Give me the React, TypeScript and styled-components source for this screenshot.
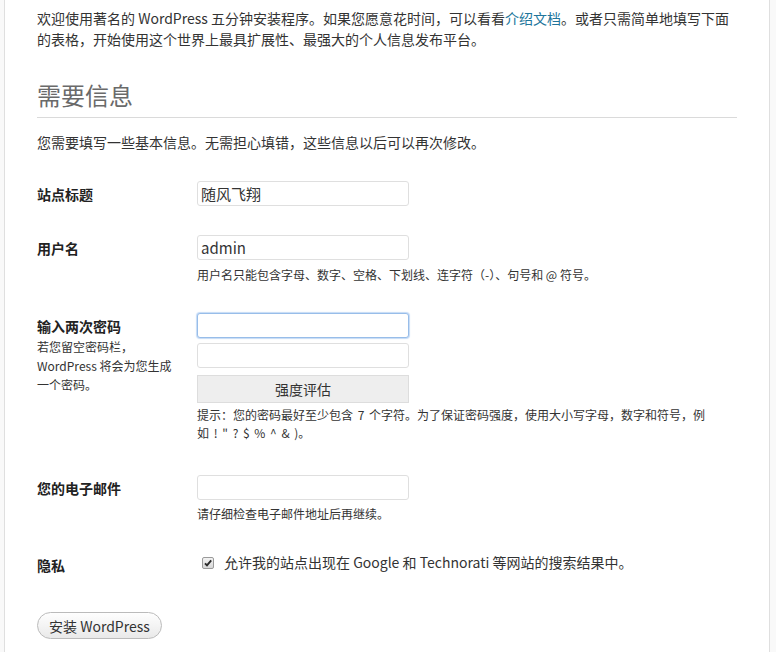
import React from 'react'
import styled, { createGlobalStyle } from 'styled-components'

const GlobalStyle = createGlobalStyle`
  html, body {
    margin: 0;
    padding: 0;
    background: #f9f9f9;
  }
  body {
    font-family: "Noto Sans CJK SC", "Liberation Sans", sans-serif;
    color: #333;
  }
`

const Page = styled.div`
  margin-left: 4px;
  width: 766px;
  min-height: 100vh;
  box-sizing: border-box;
  padding: 8px 32px 40px;
  background: #fff;
  border-left: 1px solid #dfdfdf;
  border-right: 1px solid #dfdfdf;
`

const Text = styled.p`
  margin: 0;
  font-size: 14px;
  line-height: 21px;
`

const Intro = styled(Text)``

const Note = styled(Text)`
  margin-top: 14px;
`

const Link = styled.a`
  color: #21759b;
  text-decoration: none;
`

const Heading = styled.h1`
  margin: 30px 0 0;
  padding: 0 0 7px;
  font-size: 24px;
  line-height: 30px;
  font-weight: normal;
  color: #6a6a6a;
  border-bottom: 1px solid #dadada;
`

const Rows = styled.div`
  display: flex;
  flex-direction: column;
  gap: 29px;
  margin-top: 28px;
`

const Row = styled.div`
  display: grid;
  grid-template-columns: 140px 1fr;
  column-gap: 20px;
`

const Label = styled.div`
  padding-top: 3px;
  font-size: 14px;
  line-height: 21px;
  font-weight: 700;
  color: #222;
`

const LabelNote = styled.div`
  font-size: 12px;
  line-height: 19px;
  font-weight: normal;
  color: #333;
`

const Field = styled.div`
  display: flex;
  flex-direction: column;
  align-items: flex-start;
`

const Input = styled.input<{ $focused?: boolean }>`
  width: 212px;
  height: 25px;
  box-sizing: border-box;
  margin: 0;
  padding: 0 3px;
  font-family: inherit;
  font-size: 15px;
  color: #333;
  background: #fff;
  border: 1px solid ${(p) => (p.$focused ? '#98bde9' : '#dfdfdf')};
  border-radius: 3px;
  box-shadow: ${(p) => (p.$focused ? '0 0 1px 1px #c5dbf6' : 'none')};
  outline: none;
  & + & {
    margin-top: 5px;
  }
`

const Meter = styled.div`
  width: 212px;
  height: 28px;
  box-sizing: border-box;
  margin-top: 7px;
  display: flex;
  align-items: center;
  justify-content: center;
  font-size: 14px;
  color: #333;
  background: #eee;
  border: 1px solid #ddd;
`

const Hint = styled.p<{ $gap?: number }>`
  margin: ${(p) => p.$gap ?? 5}px 0 0;
  max-width: 512px;
  font-size: 12px;
  line-height: 18px;
`

const PassHint = styled(Hint)`
  margin-bottom: 4px;
  word-spacing: 2px;
`

const CheckLine = styled.label`
  display: flex;
  align-items: center;
  font-size: 14px;
  line-height: 21px;
`

const Box = styled.span`
  display: inline-flex;
  margin: 0 10px 0 5px;
  width: 12px;
  height: 12px;
`

const Submit = styled.button`
  margin-top: 36px;
  height: 27px;
  padding: 0 11px;
  font-family: inherit;
  font-size: 14px;
  color: #333;
  border: 1px solid #bbb;
  border-radius: 14px;
  background: linear-gradient(to bottom, #fefefe, #f4f4f4 50%, #e9e9e9);
  cursor: pointer;
`

const CheckMark = () => (
  <svg width="12" height="12" viewBox="0 0 12 12">
    <defs>
      <linearGradient id="boxFill" x1="0" y1="0" x2="0" y2="1">
        <stop offset="0" stopColor="#f4f4f4" />
        <stop offset="1" stopColor="#d6d6d6" />
      </linearGradient>
    </defs>
    <rect x="0.5" y="0.5" width="11" height="11" rx="1.5" fill="url(#boxFill)" stroke="#9a9a9a" />
    <path d="M3 6.3 L5 8.4 L9.2 3.4" fill="none" stroke="#2a2a2a" strokeWidth="1.9" />
  </svg>
)

export default function App() {
  return (
    <>
      <GlobalStyle />
      <Page>
        <Intro>
          欢迎使用著名的 WordPress 五分钟安装程序。如果您愿意花时间，可以看看
          <Link href="#">介绍文档</Link>
          。或者只需简单地填写下面的表格，开始使用这个世界上最具扩展性、最强大的个人信息发布平台。
        </Intro>

        <Heading>需要信息</Heading>
        <Note>您需要填写一些基本信息。无需担心填错，这些信息以后可以再次修改。</Note>

        <Rows>
          <Row>
            <Label>站点标题</Label>
            <Field>
              <Input defaultValue="随风飞翔" />
            </Field>
          </Row>

          <Row>
            <Label>用户名</Label>
            <Field>
              <Input defaultValue="admin" />
              <Hint $gap={6}>用户名只能包含字母、数字、空格、下划线、连字符（-）、句号和 @ 符号。</Hint>
            </Field>
          </Row>

          <Row>
            <Label>
              输入两次密码
              <LabelNote>若您留空密码栏，WordPress 将会为您生成一个密码。</LabelNote>
            </Label>
            <Field>
              <Input type="password" $focused />
              <Input type="password" />
              <Meter>强度评估</Meter>
              <PassHint $gap={3}>
                提示：您的密码最好至少包含 7 个字符。为了保证密码强度，使用大小写字母，数字和符号，例如 ! " ? $ % ^ &amp; )。
              </PassHint>
            </Field>
          </Row>

          <Row>
            <Label>您的电子邮件</Label>
            <Field>
              <Input type="text" />
              <Hint>请仔细检查电子邮件地址后再继续。</Hint>
            </Field>
          </Row>

          <Row>
            <Label>隐私</Label>
            <Field>
              <CheckLine>
                <Box>
                  <CheckMark />
                </Box>
                允许我的站点出现在 Google 和 Technorati 等网站的搜索结果中。
              </CheckLine>
            </Field>
          </Row>
        </Rows>

        <Submit type="button">安装 WordPress</Submit>
      </Page>
    </>
  )
}
